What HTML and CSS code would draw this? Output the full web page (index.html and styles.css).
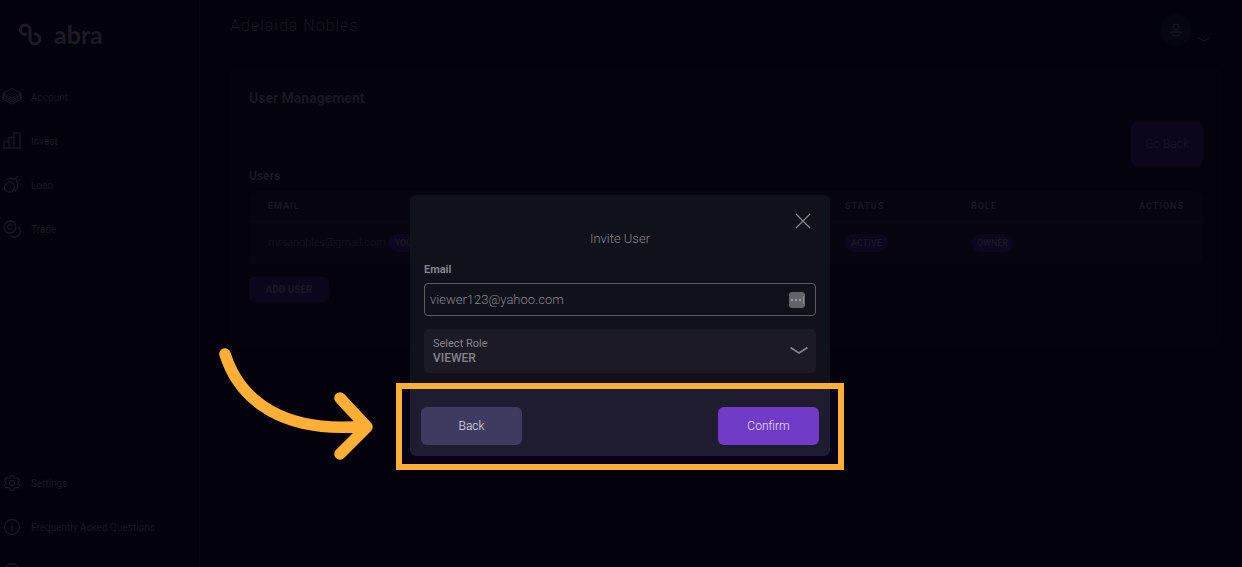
FILE: index.html
```
<!DOCTYPE html>
<html lang="en">
<head>
  <meta charset="UTF-8" />
  <title>User Management</title>
  <meta name="viewport" content="width=device-width, initial-scale=1" />
  <link rel="stylesheet" href="styles.css">
</head>
<body>
  <div class="app">
    <aside class="sidebar">
      <a class="logo" href="#">
        <svg width="24" height="24" viewBox="0 0 24 24" fill="none" stroke="currentColor" stroke-width="3" stroke-linecap="round">
          <path d="M7.500 12.500A4.800 4.800 0 1 1 12 7v10a5 5 0 1 0 5-5"/>
        </svg>
        <span>abra</span>
      </a>

      <nav class="nav">
        <a href="#">
          <svg class="icon" viewBox="0 0 20 20"><path d="M10 1.500L19 6v6l-9 5-9-5V6zM1 6l9 5 9-5M1 8l9 5 9-5M1 10l9 5 9-5"/></svg>
          Account
        </a>
        <a href="#">
          <svg class="icon" viewBox="0 0 20 20"><path d="M2 10.500h5V17H2zM7 6.500h5V17H7zM12 2h6v15h-6z"/></svg>
          Invest
        </a>
        <a href="#">
          <svg class="icon" viewBox="0 0 20 20"><circle cx="7.500" cy="12" r="5"/><path d="M4 5l3-2 6 1 3-3M13 4l2 2 3-1M15 6l1 6-3 4"/></svg>
          Loan
        </a>
        <a href="#">
          <svg class="icon" viewBox="0 0 20 20"><circle cx="8" cy="8" r="6"/><path d="M10 6.500a2.500 2.500 0 1 0 0 3M16.500 7.500A6 6 0 1 1 8 16.500"/></svg>
          Trade
        </a>
      </nav>

      <nav class="nav nav-bottom">
        <a href="#">
          <svg class="icon" viewBox="0 0 20 20"><circle cx="10" cy="10" r="2.500"/><path d="M8.500 2.500h3l.6 2.200 1.800 1 2.200-.6 1.500 2.600-1.600 1.600v1.400l1.600 1.600-1.500 2.600-2.200-.6-1.800 1-.6 2.200h-3l-.6-2.200-1.800-1-2.200.6-1.500-2.600L4 10.700V9.300L2.400 7.700l1.500-2.600 2.200.6 1.800-1z"/></svg>
          Settings
        </a>
        <a href="#">
          <svg class="icon" viewBox="0 0 20 20"><circle cx="10" cy="10" r="7.500"/><path d="M10 9v5M10 6v1.500" stroke-width="1.500"/></svg>
          Frequently Asked Questions
        </a>
        <a href="#" aria-label="Help">
          <svg class="icon" viewBox="0 0 20 20"><circle cx="10" cy="10" r="7.500"/></svg>
        </a>
      </nav>
    </aside>

    <main class="main">
      <header class="topbar">
        <span class="account-name">Adelaida Nobles</span>
        <button class="profile" type="button" aria-label="Profile">
          <span class="avatar">
            <svg width="14" height="16" viewBox="0 0 14 16" fill="none" stroke="currentColor"><circle cx="7" cy="5" r="3"/><path d="M2 10h10a5 4 0 0 1-10 0z"/></svg>
          </span>
          <svg class="profile-arrow" width="12" height="6" viewBox="0 0 12 6" fill="none" stroke="currentColor" stroke-width="1.300"><path d="M1 1l5 3 5-3"/></svg>
        </button>
      </header>

      <section class="card">
        <h1>User Management</h1>
        <button class="go-back" type="button">Go Back</button>
        <h2>Users</h2>
        <table class="users">
          <thead>
            <tr>
              <th class="col-email">Email</th>
              <th class="col-status">Status</th>
              <th>Role</th>
              <th class="col-actions">Actions</th>
            </tr>
          </thead>
          <tbody>
            <tr>
              <td>mrsanobles@gmail.com <span class="badge">You</span></td>
              <td><span class="badge">Active</span></td>
              <td><span class="badge">Owner</span></td>
              <td></td>
            </tr>
          </tbody>
        </table>
        <button class="add-user" type="button">Add User</button>
      </section>
    </main>
  </div>

  <div class="overlay">
    <form class="modal" role="dialog" aria-labelledby="modal-title">
      <div class="modal-body">
        <button class="close" type="button" aria-label="Close">
          <svg width="16" height="16" viewBox="0 0 16 16" fill="none" stroke="currentColor" stroke-width="1.300"><path d="M1 1l14 14M15 1L1 15"/></svg>
        </button>
        <h3 id="modal-title">Invite User</h3>

        <label class="field-label" for="email">Email</label>
        <div class="email-field">
          <input type="text" id="email" name="email" value="viewer123@yahoo.com">
          <svg width="18" height="18" viewBox="0 0 18 18"><rect x="1" y="1" width="16" height="16" rx="3" fill="#63646a"/><path d="M15.500 5v8" stroke="#8b8b90"/><g fill="#98989c"><circle cx="4" cy="9" r="1.200"/><circle cx="8" cy="9" r="1.200"/><circle cx="12" cy="9" r="1.200"/></g></svg>
        </div>

        <div class="role-field">
          <label for="role">Select Role</label>
          <select id="role" name="role">
            <option>VIEWER</option>
          </select>
          <svg class="role-arrow" width="20" height="10" viewBox="0 0 20 10" fill="none" stroke="currentColor" stroke-width="1.600"><path d="M1.500 1.500l8.500 5.500 8.500-5.500"/></svg>
        </div>
      </div>

      <div class="spotlight">
        <svg class="arrow" width="160" height="120" viewBox="0 0 160 120" fill="none" stroke="#ffaf36" stroke-width="11.500" stroke-linecap="round" stroke-linejoin="round">
          <path d="M10 10C25 58 70 90 151 82M125 54l27 29-27 27"/>
        </svg>
        <div class="modal-footer">
          <button class="btn back" type="button">Back</button>
          <button class="btn confirm" type="submit">Confirm</button>
        </div>
      </div>
    </form>
  </div>
</body>
</html>
```
FILE: styles.css
```
* {
  box-sizing: border-box;
}

body {
  margin: 0;
  height: 100vh;
  overflow: hidden;
  background: #03010b;
  color: #191722;
  font-family: Roboto, sans-serif;
  font-size: 12px;
  font-weight: 300;
}

button,
input,
select {
  font-family: inherit;
  font-size: inherit;
  font-weight: inherit;
  color: inherit;
  border: none;
  padding: 0;
}

button {
  cursor: pointer;
}

a {
  color: inherit;
  text-decoration: none;
}

h1,
h2,
h3 {
  margin: 0;
}

.app {
  display: flex;
  height: 100vh;
}

/* sidebar */
.sidebar {
  flex: 0 0 200px;
  padding-top: 18px;
  border-right: 1px solid #06040f;
  overflow: hidden;
}

.logo {
  display: flex;
  align-items: center;
  gap: 12px;
  height: 32px;
  padding-left: 18px;
  color: #1d1a25;
  font-family: Lato, sans-serif;
  font-size: 25px;
  font-weight: 700;
}

.nav {
  margin-top: 25px;
}

.nav a {
  display: flex;
  align-items: center;
  gap: 9px;
  height: 44px;
  padding-left: 2px;
  font-size: 10px;
  font-weight: 400;
}

.nav-bottom {
  margin-top: 210px;
}

.icon {
  width: 20px;
  height: 20px;
  fill: none;
  stroke: currentColor;
  stroke-width: 1.3;
  stroke-linejoin: round;
}

/* page */
.main {
  flex: 1;
  padding: 0 20px 0 30px;
}

.topbar {
  display: flex;
  justify-content: space-between;
  height: 68px;
  padding: 14px 12px 0 0;
}

.account-name {
  font-size: 16px;
  line-height: 24px;
  letter-spacing: 1px;
}

.profile {
  display: flex;
  align-items: center;
  gap: 6px;
  height: 32px;
  background: none;
}

.avatar {
  display: grid;
  place-items: center;
  width: 32px;
  height: 32px;
  border-radius: 50%;
  background: #060611;
}

.profile-arrow {
  align-self: flex-end;
  margin-bottom: 3px;
}

.card {
  display: flex;
  flex-direction: column;
  padding: 20px 19px 45px;
  background: #04020c;
  border-radius: 6px;
}

h1 {
  font-size: 14px;
  line-height: 20px;
}

h2 {
  margin-top: 2px;
  font-size: 12px;
  line-height: 16px;
}

.go-back {
  align-self: flex-end;
  width: 72px;
  height: 44px;
  margin: 14px 0 0;
  background: #0c061c;
  border-radius: 6px;
  font-size: 12px;
}

.users {
  width: 100%;
  margin-top: 7px;
  border-spacing: 0;
  background: #06040e;
  border-radius: 6px;
}

.users th,
.users td {
  padding: 0 19px;
  text-align: left;
}

.users th {
  height: 31px;
  border-bottom: 1px solid #080611;
  font-size: 9px;
  letter-spacing: 1px;
  text-transform: uppercase;
}

.users td {
  height: 42px;
  font-size: 11px;
}

.users td:nth-child(n+2),
.users th:nth-child(n+2) {
  padding-left: 0;
}

.col-email {
  width: 596px;
}

.col-status {
  width: 126px;
}

.users .col-actions {
  padding-right: 19px;
  text-align: right;
}

.badge {
  display: inline-block;
  padding: 0 6px;
  background: #0c061e;
  border-radius: 9px;
  font-size: 9px;
  font-weight: 700;
  line-height: 18px;
  text-transform: uppercase;
}

.add-user {
  width: 80px;
  height: 25px;
  margin-top: 13px;
  background: #0c061c;
  border-radius: 5px;
  font-size: 10px;
  font-weight: 700;
  text-transform: uppercase;
}

/* invite dialog */
.overlay {
  position: fixed;
  inset: 0;
  display: flex;
  justify-content: center;
  align-items: flex-start;
  padding: 195px 2px 0 0;
}

.modal {
  width: 420px;
  color: #85848a;
}

.modal-body {
  display: flex;
  flex-direction: column;
  padding: 18px 14px 10px;
  background: #11111c;
  border-radius: 6px 6px 0 0;
}

.close {
  align-self: flex-end;
  width: 16px;
  height: 16px;
  margin-right: 5px;
  background: none;
}

.close svg {
  display: block;
}

h3 {
  font-size: 13px;
  font-weight: 300;
  line-height: 20px;
  text-align: center;
}

.field-label {
  margin-top: 13px;
  font-size: 11px;
  font-weight: 700;
  line-height: 16px;
}

.email-field {
  display: flex;
  align-items: center;
  height: 33px;
  margin-top: 5px;
  padding: 0 9px 0 5px;
  border: 1px solid #5d5d63;
  border-radius: 4px;
}

.email-field input {
  flex: 1;
  background: none;
  outline: none;
  font-size: 13px;
}

.role-field {
  position: relative;
  height: 44px;
  margin-top: 13px;
  background: #1c1a25;
  border-radius: 5px;
}

.role-field label {
  position: absolute;
  top: 8px;
  left: 9px;
  font-size: 11px;
  font-weight: 400;
  line-height: 14px;
}

.role-field select {
  width: 100%;
  height: 44px;
  padding: 14px 9px 0;
  appearance: none;
  background: none;
  outline: none;
  font-size: 12px;
  font-weight: 500;
}

.role-arrow {
  position: absolute;
  top: 17px;
  right: 7px;
  pointer-events: none;
}

/* yellow frame round the dialog actions */
.spotlight {
  position: relative;
  margin: 0 -14px;
  padding: 0 8px 8px;
  border: 6px solid #ffaf36;
  background: #050218;
}

.modal-footer {
  display: flex;
  justify-content: space-between;
  padding: 18px 11px 11px;
  background: #1f1c30;
  border-radius: 0 0 6px 6px;
}

.btn {
  width: 101px;
  height: 38px;
  border-radius: 6px;
  color: #e3e0ea;
  font-size: 12px;
}

.back {
  background: #3f3a60;
}

.confirm {
  background: #703cc7;
}

.arrow {
  position: absolute;
  top: -45px;
  right: 100%;
  margin-right: 27px;
}
```
